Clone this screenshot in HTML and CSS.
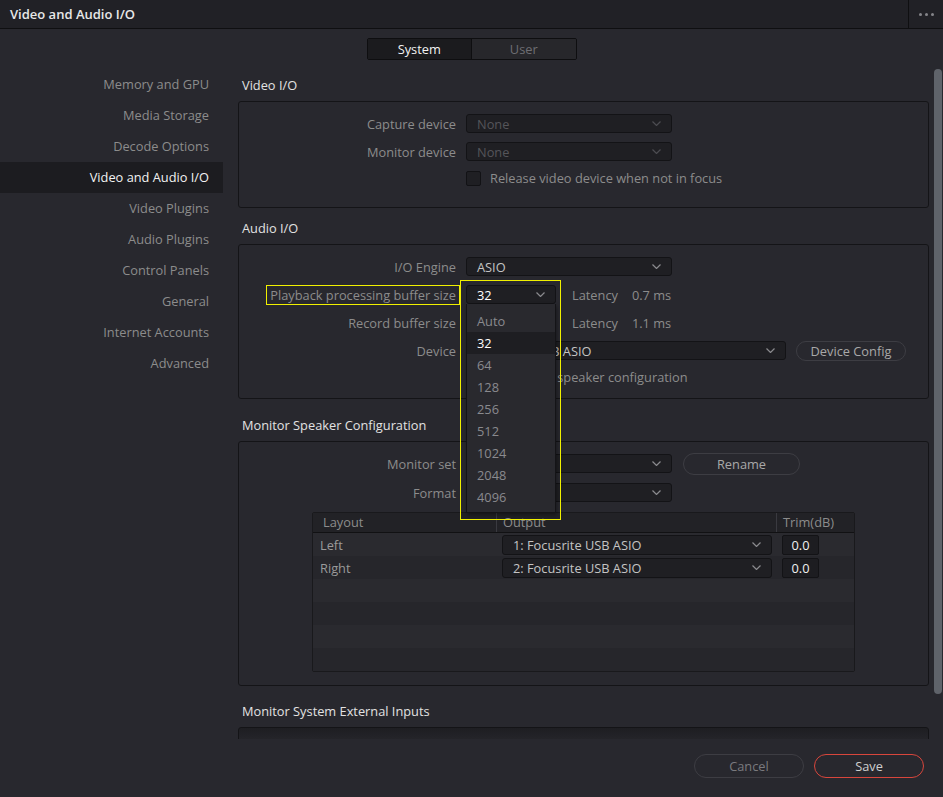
FILE: index.html
```html
<!DOCTYPE html>
<html lang="en">
<head>
    <meta charset="UTF-8">
    <meta name="viewport" content="width=device-width, initial-scale=1.0">
    <title>Video and Audio I/O</title>
    <link rel="stylesheet" href="styles.css">
</head>
<body>
<div class="window">
    <header class="titlebar">
        <div class="title">Video and Audio I/O</div>
        <div class="more"><span></span><span></span><span></span></div>
    </header>

    <div class="tabs">
        <div class="tab active">System</div>
        <div class="tab">User</div>
    </div>

    <div class="main">
        <nav class="sidebar">
            <a href="#">Memory and GPU</a>
            <a href="#">Media Storage</a>
            <a href="#">Decode Options</a>
            <a href="#" class="selected">Video and Audio I/O</a>
            <a href="#">Video Plugins</a>
            <a href="#">Audio Plugins</a>
            <a href="#">Control Panels</a>
            <a href="#">General</a>
            <a href="#">Internet Accounts</a>
            <a href="#">Advanced</a>
        </nav>

        <div class="content">
            <div class="scroll-view">
                <!-- Video I/O -->
                <section class="section first">
                    <div class="section-header">Video I/O</div>
                    <div class="box box-video">
                        <div class="row">
                            <div class="label">Capture device</div>
                            <div class="select w-wide disabled"><span>None</span><svg class="chev" viewBox="0 0 9 5"><path d="M0.5 0.5 L4.5 4.5 L8.5 0.5"/></svg></div>
                        </div>
                        <div class="row">
                            <div class="label">Monitor device</div>
                            <div class="select w-wide disabled"><span>None</span><svg class="chev" viewBox="0 0 9 5"><path d="M0.5 0.5 L4.5 4.5 L8.5 0.5"/></svg></div>
                        </div>
                        <div class="row row-check">
                            <div class="label"></div>
                            <div class="checkbox"></div>
                            <div class="check-label">Release video device when not in focus</div>
                        </div>
                    </div>
                </section>

                <!-- Audio I/O -->
                <section class="section tight">
                    <div class="section-header">Audio I/O</div>
                    <div class="box">
                        <div class="row">
                            <div class="label">I/O Engine</div>
                            <div class="select w-wide"><span>ASIO</span><svg class="chev" viewBox="0 0 9 5"><path d="M0.5 0.5 L4.5 4.5 L8.5 0.5"/></svg></div>
                        </div>
                        <div class="row">
                            <div class="label"><span class="highlight">Playback processing buffer size</span></div>
                            <div class="select-wrap">
                                <div class="select w-small open"><span>32</span><svg class="chev" viewBox="0 0 9 5"><path d="M0.5 0.5 L4.5 4.5 L8.5 0.5"/></svg></div>
                                <div class="popup">
                                    <div class="popup-item">Auto</div>
                                    <div class="popup-item current">32</div>
                                    <div class="popup-item">64</div>
                                    <div class="popup-item">128</div>
                                    <div class="popup-item">256</div>
                                    <div class="popup-item">512</div>
                                    <div class="popup-item">1024</div>
                                    <div class="popup-item">2048</div>
                                    <div class="popup-item">4096</div>
                                </div>
                                <div class="focus-frame"></div>
                            </div>
                            <div class="latency">Latency</div>
                            <div class="latency-value">0.7 ms</div>
                        </div>
                        <div class="row">
                            <div class="label">Record buffer size</div>
                            <div class="select w-small"><span></span><svg class="chev" viewBox="0 0 9 5"><path d="M0.5 0.5 L4.5 4.5 L8.5 0.5"/></svg></div>
                            <div class="latency">Latency</div>
                            <div class="latency-value">1.1 ms</div>
                        </div>
                        <div class="row">
                            <div class="label">Device</div>
                            <div class="select w-device"><span>Focusrite USB ASIO</span><svg class="chev" viewBox="0 0 9 5"><path d="M0.5 0.5 L4.5 4.5 L8.5 0.5"/></svg></div>
                            <button class="pill pill-row">Device Config</button>
                        </div>
                        <div class="row row-check">
                            <div class="label"></div>
                            <div class="checkbox"></div>
                            <div class="check-label">Use stereo speaker configuration</div>
                        </div>
                    </div>
                </section>

                <!-- Monitor Speaker Configuration -->
                <section class="section wide">
                    <div class="section-header">Monitor Speaker Configuration</div>
                    <div class="box box-monitor">
                        <div class="row">
                            <div class="label">Monitor set</div>
                            <div class="select w-wide"><span></span><svg class="chev" viewBox="0 0 9 5"><path d="M0.5 0.5 L4.5 4.5 L8.5 0.5"/></svg></div>
                            <button class="pill pill-rename">Rename</button>
                        </div>
                        <div class="row">
                            <div class="label">Format</div>
                            <div class="select w-wide"><span></span><svg class="chev" viewBox="0 0 9 5"><path d="M0.5 0.5 L4.5 4.5 L8.5 0.5"/></svg></div>
                        </div>

                        <div class="tbl">
                            <div class="tbl-head">
                                <div class="th th-first">Layout</div>
                                <div class="th">Output</div>
                                <div class="th">Trim(dB)</div>
                            </div>
                            <div class="tbl-row">
                                <div class="td td-name">Left</div>
                                <div class="td"><div class="select w-output"><span>1: Focusrite USB ASIO</span><svg class="chev" viewBox="0 0 9 5"><path d="M0.5 0.5 L4.5 4.5 L8.5 0.5"/></svg></div></div>
                                <div class="td"><div class="trim">0.0</div></div>
                            </div>
                            <div class="tbl-row">
                                <div class="td td-name">Right</div>
                                <div class="td"><div class="select w-output"><span>2: Focusrite USB ASIO</span><svg class="chev" viewBox="0 0 9 5"><path d="M0.5 0.5 L4.5 4.5 L8.5 0.5"/></svg></div></div>
                                <div class="td"><div class="trim">0.0</div></div>
                            </div>
                            <div class="tbl-row"></div>
                            <div class="tbl-row"></div>
                            <div class="tbl-row"></div>
                            <div class="tbl-row"></div>
                        </div>
                    </div>
                </section>

                <!-- Monitor System External Inputs -->
                <section class="section">
                    <div class="section-header">Monitor System External Inputs</div>
                    <div class="box box-inputs"></div>
                </section>
            </div>
            <div class="scrollbar"><div class="thumb"></div></div>
        </div>
    </div>

    <footer class="footer">
        <button class="pill btn">Cancel</button>
        <button class="pill btn btn-save">Save</button>
    </footer>
</div>
</body>
</html>
```

FILE: styles.css
```css
body {
    margin: 0;
    background-color: #28282e;
    font-family: "Open Sans", "Noto Sans", sans-serif;
    font-size: 12.8px;
    color: #8c8c8c;
}
.window {
    width: 943px;
    height: 797px;
    overflow: hidden;
    background: #28282e;
}

/* title bar */
.titlebar {
    display: flex;
    height: 28px;
    background: #212126;
    border-bottom: 1px solid #0f0f11;
}
.title {
    flex: 1;
    padding-left: 10px;
    line-height: 28px;
    font-size: 13px;
    font-weight: 600;
    color: #e8e8e8;
}
.more {
    width: 34px;
    border-left: 1px solid #0f0f11;
    display: flex;
    align-items: center;
    justify-content: center;
    gap: 3px;
}
.more span {
    width: 3px;
    height: 3px;
    border-radius: 50%;
    background: #85858a;
}

/* tabs */
.tabs {
    display: flex;
    width: 210px;
    height: 22px;
    margin: 9px auto 9px;
    border: 1px solid #0e0e10;
    border-radius: 2px;
    box-sizing: border-box;
    overflow: hidden;
}
.tab {
    flex: 1;
    text-align: center;
    line-height: 20px;
    background: #27272b;
    color: #6e6e73;
}
.tab.active {
    background: #1b1b1e;
    color: #f2f2f2;
    border-right: 1px solid #0e0e10;
}

/* layout */
.main {
    display: flex;
    height: 670px;
}
.sidebar {
    width: 223px;
    flex-shrink: 0;
}
.sidebar a {
    display: block;
    height: 31px;
    line-height: 31px;
    padding-right: 14px;
    text-align: right;
    color: #8c8c8c;
    text-decoration: none;
}
.sidebar a.selected {
    background: #1c1c20;
    color: #f2f2f2;
}
.content {
    flex: 1;
    display: flex;
}
.scroll-view {
    flex: 1;
    padding: 0 5px 0 15px;
    overflow: hidden;
}
.scrollbar {
    width: 8px;
    margin-right: 1px;
}
.thumb {
    height: 625px;
    background: #5f636a;
    border-radius: 4px;
}

/* sections */
.section {
    margin-top: 9px;
}
.section.first {
    margin-top: 0;
}
.section.tight {
    margin-top: 4px;
}
.section.wide {
    margin-top: 10px;
}
.section-header {
    height: 32px;
    line-height: 32px;
    padding-left: 4px;
    color: #e2e2e2;
}
.box {
    border: 1px solid #141417;
    border-radius: 3px;
    padding: 12px 0 13px;
}
.box-video {
    padding-bottom: 21px;
}
.box-monitor {
    padding-bottom: 13px;
}
.box-monitor .row {
    margin-bottom: 10px;
}
.box-inputs {
    height: 80px;
    padding: 0;
    background: linear-gradient(#1e1e22, #25252a 12px);
}

.row {
    display: flex;
    align-items: center;
    height: 19px;
    margin-bottom: 9px;
}
.row:last-child {
    margin-bottom: 0;
}
.row-check {
    height: 16px;
}
.label {
    width: 217px;
    margin-right: 10px;
    text-align: right;
    white-space: nowrap;
    color: #8c8c8c;
}
.highlight {
    display: inline-block;
    padding: 0 3px;
    margin-right: -3px;
    line-height: 18px;
    outline: 1px solid #f0f000;
}

/* selects */
.select {
    display: flex;
    align-items: center;
    justify-content: space-between;
    height: 19px;
    box-sizing: border-box;
    padding: 0 10px;
    border: 1px solid #131316;
    border-radius: 3px;
    background: #1f1f23;
    color: #c4c4c4;
    white-space: nowrap;
}
.select.disabled {
    color: #55555a;
}
.select.open {
    color: #ffffff;
}
.chev {
    width: 9px;
    height: 5px;
    flex-shrink: 0;
    fill: none;
    stroke: #8a8a8e;
    stroke-width: 1.2;
}
.select.disabled .chev {
    stroke: #4c4c51;
}
.w-wide { width: 206px; }
.w-small { width: 90px; }
.w-device { width: 320px; }
.w-output { width: 270px; height: 20px; }

.select-wrap {
    position: relative;
}
.popup {
    position: absolute;
    top: 19px;
    left: 0;
    width: 90px;
    box-sizing: border-box;
    padding: 6px 0 4px;
    background: #29292e;
    border: 1px solid #141417;
    border-top: none;
    box-shadow: 1px 2px 4px rgba(0, 0, 0, 0.4);
    z-index: 10;
}
.popup-item {
    height: 22px;
    line-height: 22px;
    padding-left: 10px;
    color: #8a8a8e;
}
.popup-item.current {
    background: #1e1e22;
    color: #ffffff;
}
.focus-frame {
    position: absolute;
    top: -5px;
    left: -6px;
    width: 101px;
    height: 240px;
    box-sizing: border-box;
    border: 1px solid #f0f000;
    z-index: 11;
}

.latency {
    margin-left: 16px;
}
.latency-value {
    margin-left: 14px;
}

.checkbox {
    width: 15px;
    height: 15px;
    box-sizing: border-box;
    border: 1px solid #121215;
    border-radius: 2px;
    background: #1f1f23;
}
.check-label {
    margin-left: 9px;
    color: #8c8c8c;
}

/* buttons */
.pill {
    font-family: inherit;
    font-size: 12.8px;
    background: transparent;
    border: 1px solid #3d3d43;
    border-radius: 12px;
    color: #a8a8a8;
    padding: 0;
    box-sizing: border-box;
}
.pill-row {
    width: 110px;
    height: 20px;
    margin-left: 10px;
}
.pill-rename {
    width: 117px;
    height: 22px;
    margin-left: 11px;
}

/* table */
.tbl {
    margin: 8px 73px 0;
    border: 1px solid #19191c;
    border-radius: 2px;
    background: #27272c;
}
.tbl-head,
.tbl-row {
    display: grid;
    grid-template-columns: 183px 280px 1fr;
}
.tbl-head {
    height: 19px;
    background: #222226;
    border-bottom: 1px solid #111113;
}
.th {
    line-height: 19px;
    padding-left: 6px;
    border-left: 1px solid #3a3a40;
    color: #8c8c8c;
}
.th.th-first {
    padding-left: 10px;
    border-left: none;
}
.tbl-row {
    height: 23px;
    align-items: center;
    background: #2a2a2f;
}
.tbl-row:nth-child(odd) {
    background: #26262b;
}
.td {
    padding-left: 6px;
}
.td-name {
    padding-left: 7px;
    color: #9a9a9a;
}
.trim {
    width: 37px;
    height: 20px;
    box-sizing: border-box;
    line-height: 18px;
    text-align: center;
    border: 1px solid #131316;
    border-radius: 2px;
    background: #1d1d21;
    color: #f0f0f0;
}

/* footer */
.footer {
    display: flex;
    justify-content: flex-end;
    gap: 10px;
    padding: 15px 19px 0 0;
}
.btn {
    width: 110px;
    height: 24px;
    color: #7a7a7e;
}
.btn-save {
    border-color: #d8463c;
    color: #cfcfcf;
}
```
